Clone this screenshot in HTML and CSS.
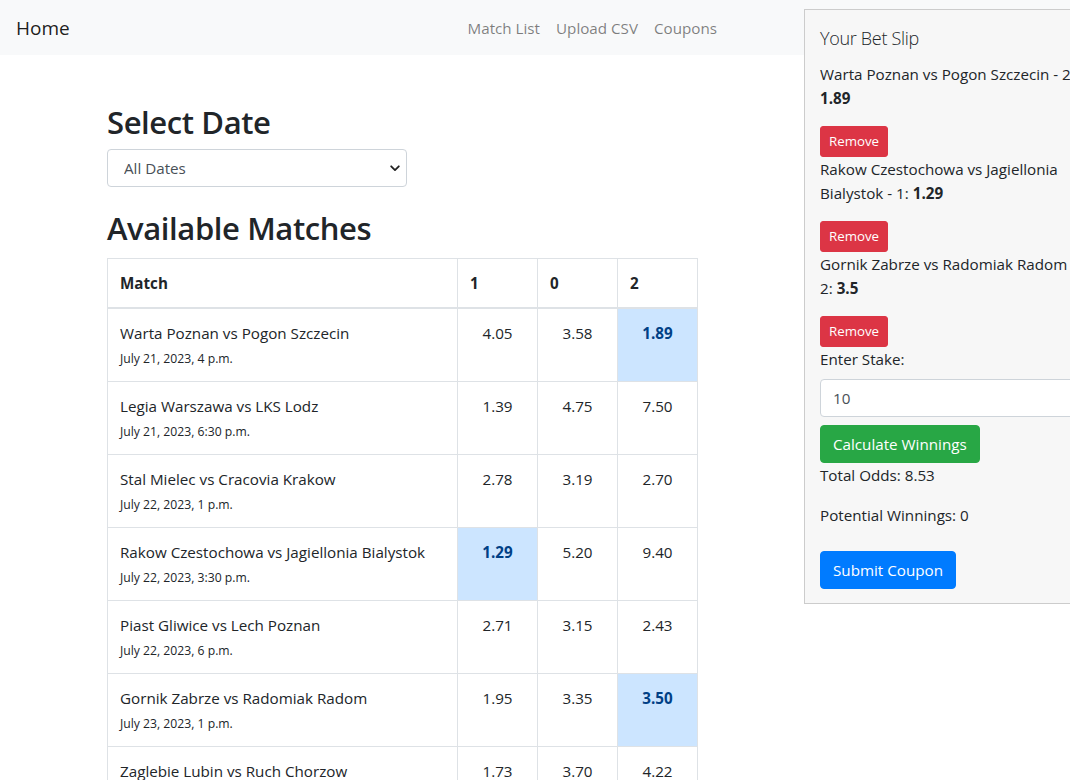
FILE: index.html
```html
<!DOCTYPE html>
<html lang="en">
<head>
<meta charset="utf-8">
<title>Matches</title>
<link rel="stylesheet" href="styles.css">
</head>
<body>
<nav class="navbar">
  <a class="brand" href="#">Home</a>
  <ul class="nav-links">
    <li><a href="#">Match List</a></li>
    <li><a href="#">Upload CSV</a></li>
    <li><a href="#">Coupons</a></li>
  </ul>
</nav>

<main class="container">
  <h2 class="page-title">Select Date</h2>
  <div class="select-wrap">
    <select class="date-select">
      <option>All Dates</option>
    </select>
    <svg class="chevron" width="10" height="7" viewBox="0 0 10 7" aria-hidden="true"><path d="M1.2 1.3 5 5.1 8.8 1.3" fill="none" stroke="#222" stroke-width="1.8" stroke-linecap="round" stroke-linejoin="round"/></svg>
  </div>

  <h2 class="page-title matches-title">Available Matches</h2>
  <table class="odds-table">
    <colgroup>
      <col class="col-match"><col class="col-odd"><col class="col-odd"><col class="col-odd">
    </colgroup>
    <thead>
      <tr><th>Match</th><th>1</th><th>0</th><th>2</th></tr>
    </thead>
    <tbody>
      <tr><td class="match">Warta Poznan vs Pogon Szczecin<br><small>July 21, 2023, 4 p.m.</small></td><td class="odd">4.05</td><td class="odd">3.58</td><td class="odd picked">1.89</td></tr>
      <tr><td class="match">Legia Warszawa vs LKS Lodz<br><small>July 21, 2023, 6:30 p.m.</small></td><td class="odd">1.39</td><td class="odd">4.75</td><td class="odd">7.50</td></tr>
      <tr><td class="match">Stal Mielec vs Cracovia Krakow<br><small>July 22, 2023, 1 p.m.</small></td><td class="odd">2.78</td><td class="odd">3.19</td><td class="odd">2.70</td></tr>
      <tr><td class="match">Rakow Czestochowa vs Jagiellonia Bialystok<br><small>July 22, 2023, 3:30 p.m.</small></td><td class="odd picked">1.29</td><td class="odd">5.20</td><td class="odd">9.40</td></tr>
      <tr><td class="match">Piast Gliwice vs Lech Poznan<br><small>July 22, 2023, 6 p.m.</small></td><td class="odd">2.71</td><td class="odd">3.15</td><td class="odd">2.43</td></tr>
      <tr><td class="match">Gornik Zabrze vs Radomiak Radom<br><small>July 23, 2023, 1 p.m.</small></td><td class="odd">1.95</td><td class="odd">3.35</td><td class="odd picked">3.50</td></tr>
      <tr><td class="match">Zaglebie Lubin vs Ruch Chorzow<br><small>July 23, 2023, 3:30 p.m.</small></td><td class="odd">1.73</td><td class="odd">3.70</td><td class="odd">4.22</td></tr>
    </tbody>
  </table>
</main>

<aside class="bet-slip">
  <h5 class="slip-title">Your Bet Slip</h5>
  <p class="slip-item">Warta Poznan vs Pogon Szczecin - 2: <strong>1.89</strong></p>
  <button class="btn btn-sm btn-danger">Remove</button>
  <p class="slip-item">Rakow Czestochowa vs Jagiellonia Bialystok - 1: <strong>1.29</strong></p>
  <button class="btn btn-sm btn-danger">Remove</button>
  <p class="slip-item">Gornik Zabrze vs Radomiak Radom - 2: <strong>3.5</strong></p>
  <button class="btn btn-sm btn-danger">Remove</button>
  <label class="stake-label" for="stake">Enter Stake:</label>
  <input class="stake-input" id="stake" type="text" value="10">
  <button class="btn btn-success">Calculate Winnings</button>
  <p class="slip-stat">Total Odds: 8.53</p>
  <p class="slip-stat last">Potential Winnings: 0</p>
  <button class="btn btn-primary">Submit Coupon</button>
</aside>
</body>
</html>
```

FILE: styles.css
```css
* { box-sizing: border-box; }

html, body { margin: 0; padding: 0; }

body {
  font-family: "Open Sans", "Noto Sans", sans-serif;
  font-size: 15.2px;
  line-height: 24px;
  color: #212529;
  background: #fff;
}

/* Navbar */
.navbar {
  display: flex;
  align-items: center;
  height: 55px;
  padding: 0 16px;
  background: #f8f9fa;
}
.brand {
  font-size: 19px;
  line-height: 30px;
  color: rgba(0, 0, 0, 0.9);
  text-decoration: none;
}
.nav-links {
  display: flex;
  list-style: none;
  margin: 0 329px 0 auto;
  padding: 0;
}
.nav-links a {
  display: block;
  padding: 0 8px;
  color: rgba(0, 0, 0, 0.5);
  text-decoration: none;
}

/* Main */
.container {
  margin-left: 107px;
  width: 590px;
  padding-top: 48px;
}
.page-title {
  margin: 0 0 8px;
  font-size: 31px;
  line-height: 38px;
  font-weight: 600;
  letter-spacing: -0.4px;
}
.matches-title {
  margin-top: 22px;
  margin-bottom: 11px;
}

.select-wrap {
  position: relative;
  width: 300px;
}
.date-select {
  display: block;
  width: 300px;
  height: 38px;
  padding: 0 28px 0 16px;
  font: inherit;
  color: #495057;
  background: #fff;
  border: 1px solid #ced4da;
  border-radius: 4px;
  appearance: none;
  -webkit-appearance: none;
}
.chevron {
  position: absolute;
  right: 7px;
  top: 16px;
  pointer-events: none;
}

/* Table */
.odds-table {
  width: 590px;
  table-layout: fixed;
  border-collapse: collapse;
}
.col-match { width: 350px; }
.col-odd { width: 80px; }
.odds-table th,
.odds-table td {
  padding: 12px;
  border: 1px solid #dee2e6;
  vertical-align: top;
  text-align: left;
}
.odds-table thead th {
  border-bottom-width: 2px;
  font-weight: 700;
}
.odds-table td.odd {
  text-align: center;
}
.odds-table td.picked {
  background: #cce5ff;
  color: #004085;
  font-weight: 700;
}
.odds-table small {
  font-size: 12.2px;
  line-height: 1;
}

/* Bet slip */
.bet-slip {
  position: fixed;
  top: 9px;
  left: 804px;
  width: 302px;
  padding: 15px 15px 14px;
  background: #f7f7f7;
  border: 1px solid #cccccc;
}
.slip-title {
  margin: 1px 0 12px;
  font-size: 18px;
  line-height: 24px;
  font-weight: 300;
  letter-spacing: -0.3px;
  color: #212529;
}
.slip-item {
  margin: 0 0 16px;
}
.slip-stat {
  margin: 0 0 16px;
}
.slip-stat.last {
  margin-bottom: 24px;
}
.stake-label {
  display: block;
  margin-bottom: 8px;
}
.stake-input {
  display: block;
  width: 100%;
  height: 38px;
  margin-bottom: 8px;
  padding: 0 12px;
  font: inherit;
  color: #495057;
  background: #fff;
  border: 1px solid #ced4da;
  border-radius: 4px;
}

.btn {
  display: block;
  padding: 6px 12px;
  font: inherit;
  font-size: 15.2px;
  line-height: 24px;
  color: #fff;
  border: 1px solid transparent;
  border-radius: 4px;
  cursor: pointer;
}
.btn-sm {
  padding: 4px 8px;
  font-size: 13.3px;
  line-height: 21px;
  border-radius: 3px;
}
.btn-danger { background: #dc3545; border-color: #dc3545; }
.btn-success { background: #28a745; border-color: #28a745; }
.btn-primary { background: #007bff; border-color: #007bff; }
```
